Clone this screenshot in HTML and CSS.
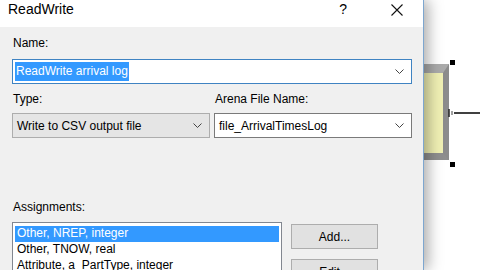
FILE: index.html
```
<!DOCTYPE html>
<html lang="en">

<head>
  <meta charset="UTF-8" />
  <meta name="viewport" content="width=device-width, initial-scale=1.0" />
  <title>ReadWrite</title>
  <link rel="stylesheet" href="styles.css">
</head>

<body>
  <div class="screen">
    <div class="dialog">
      <div class="titlebar">
        <span class="title">ReadWrite</span>
        <span class="help">?</span>
        <svg class="close" width="12" height="12" viewBox="0 0 12 12">
          <path d="M0.5 0.5 L11.5 11.5 M11.5 0.5 L0.5 11.5" stroke="#111" stroke-width="1.1" fill="none" />
        </svg>
      </div>

      <div class="content">
        <div class="lbl">Name:</div>
        <div class="combo combo-focus">
          <span class="text"><span class="selected">ReadWrite arrival log</span></span>
          <svg class="chev" width="9" height="5" viewBox="0 0 9 5">
            <path d="M0.5 0.5 L4.5 4.5 L8.5 0.5" stroke="#444" fill="none" />
          </svg>
        </div>

        <div class="pair">
          <div class="field">
            <div class="lbl">Type:</div>
            <div class="combo combo-list">
              <span class="text">Write to CSV output file</span>
              <svg class="chev" width="9" height="5" viewBox="0 0 9 5">
                <path d="M0.5 0.5 L4.5 4.5 L8.5 0.5" stroke="#444" fill="none" />
              </svg>
            </div>
          </div>
          <div class="field">
            <div class="lbl">Arena File Name:</div>
            <div class="combo">
              <span class="text">file_ArrivalTimesLog</span>
              <svg class="chev" width="9" height="5" viewBox="0 0 9 5">
                <path d="M0.5 0.5 L4.5 4.5 L8.5 0.5" stroke="#444" fill="none" />
              </svg>
            </div>
          </div>
        </div>

        <div class="assign">
          <div class="lbl">Assignments:</div>
          <div class="assign-row">
            <div class="listbox">
              <div class="item active">Other, NREP, integer</div>
              <div class="item">Other, TNOW, real</div>
              <div class="item">Attribute, a_PartType, integer</div>
            </div>
            <div class="buttons">
              <button class="btn">Add...</button>
              <button class="btn">Edit...</button>
            </div>
          </div>
        </div>
      </div>
    </div>

    <!-- model canvas behind the dialog -->
    <div class="canvas">
      <div class="module"></div>
      <div class="handle handle-top"></div>
      <div class="handle handle-bottom"></div>
      <svg class="connector" width="34" height="12" viewBox="0 0 34 12">
        <path d="M1 2 V10" stroke="#222" stroke-width="1.5" fill="none" />
        <path d="M3 5 H5 M3 7 H5" stroke="#444" stroke-width="1" fill="none" />
        <path d="M6 6 H34" stroke="#111" stroke-width="1.6" fill="none" />
      </svg>
    </div>
  </div>
</body>

</html>
```

FILE: styles.css
```
* {
  margin: 0;
  padding: 0;
  box-sizing: border-box;
}

body {
  width: 480px;
  height: 270px;
  overflow: hidden;
  background: #fff;
  font-family: "Liberation Sans", Arial, sans-serif;
  font-size: 12px;
  color: #000;
}

.screen {
  display: flex;
  width: 480px;
  height: 270px;
  overflow: hidden;
}

.dialog {
  width: 424px;
  height: 270px;
  flex: none;
  overflow: hidden;
  border-right: 1px solid #7da6cf;
  background: #f0f0f0;
  position: relative;
  z-index: 2;
  box-shadow: 4px 0 14px rgba(0, 0, 0, .34);
}

/* title bar */
.titlebar {
  height: 27px;
  background: #fff;
  display: flex;
  align-items: flex-start;
  padding: 1px 0 0 8px;
}

.title {
  font-size: 14px;
  line-height: 17px;
  flex: 1;
}

.help {
  font-size: 14px;
  line-height: 17px;
  margin-right: 44px;
}

.close {
  margin-top: 3px;
  margin-right: 20px;
}

/* dialog body */
.content {
  padding: 9px 11px 0 12px;
}

.lbl {
  line-height: 14px;
  padding-left: 1px;
  height: 14px;
}

.combo {
  height: 25px;
  margin-top: 9px;
  border: 1px solid #7a7a7a;
  background: #fff;
  display: flex;
  align-items: center;
  padding: 0 6px 0 4px;
}

.combo .text {
  flex: 1;
  white-space: nowrap;
}

.combo-focus {
  border-color: #3f83c2;
  padding-left: 2px;
}

.selected {
  background: #3399ff;
  color: #fff;
  display: inline-block;
  line-height: 19px;
  padding: 0 1px;
}

.combo-list {
  background: #e5e5e5;
  border-color: #adadad;
}

.chev {
  flex: none;
  margin-right: 1px;
}

.pair {
  display: grid;
  grid-template-columns: 198px 198px;
  gap: 4px;
  margin-top: 8px;
}

.pair .combo {
  margin-top: 7px;
}

.assign {
  margin-top: 62px;
}

.assign-row {
  display: flex;
  gap: 9px;
  margin-top: 8px;
}

.listbox {
  width: 270px;
  height: 60px;
  border: 1px solid #828790;
  background: #fff;
  padding: 3px 2px;
}

.item {
  height: 16px;
  line-height: 15px;
  padding-left: 2px;
  white-space: nowrap;
}

.item.active {
  background: #3399ff;
  color: #fff;
}

.buttons {
  display: flex;
  flex-direction: column;
  gap: 10px;
  padding-top: 2px;
}

.btn {
  width: 87px;
  height: 25px;
  border: 1px solid #adadad;
  background: #e1e1e1;
  font-family: "Liberation Sans", Arial, sans-serif;
  font-size: 12px;
  color: #000;
}

/* canvas */
.canvas {
  flex: 1;
  position: relative;
  background: #fff;
  overflow: hidden;
}

.module {
  position: absolute;
  left: -8px;
  top: 64px;
  width: 33px;
  height: 96px;
  background: #f0f0b4;
  border-top: 9px solid #ababab;
  border-right: 6px solid #8c8c8c;
  border-bottom: 7px solid #8f8f8f;
}

.handle {
  position: absolute;
  left: 26px;
  width: 5px;
  height: 5px;
  background: #000;
}

.handle-top {
  top: 60px;
}

.handle-bottom {
  top: 162px;
}

.connector {
  position: absolute;
  left: 24px;
  top: 107px;
}
```
